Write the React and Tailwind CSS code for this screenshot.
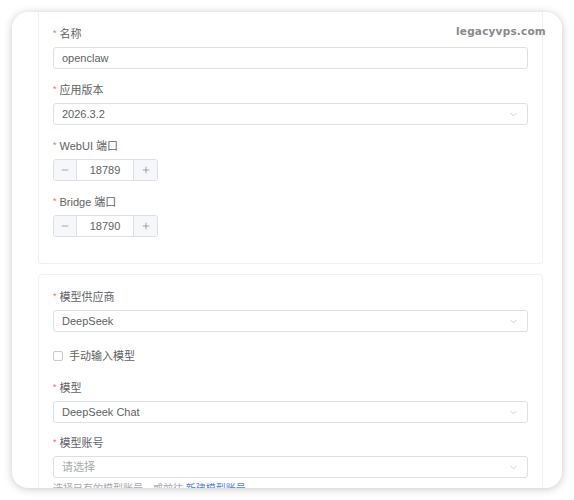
import { ChevronDown, Minus, Plus } from 'lucide-react';

const cjk = { fontFamily: '"Liberation Sans", "Noto Sans CJK SC", sans-serif' };

// Label row with the red required mark in front of it.
function Label({ text, required = true }) {
    return (
        <div className="h-[14px] flex items-center text-[11px] leading-[14px] text-[#606266] mb-[6px]">
            {required && <span className="text-[#f56c6c] text-[9px] mr-[3px] -mt-[3px]">*</span>}
            {text}
        </div>
    );
}

function TextInput({ value }) {
    return (
        <div className="h-[22px] border border-[#dcdfe6] rounded-[3px] flex items-center px-[8px] text-[11px] text-[#606266]">
            {value}
        </div>
    );
}

function Select({ value, placeholder }) {
    return (
        <div className="h-[22px] border border-[#dcdfe6] rounded-[3px] flex items-center justify-between pl-[8px] pr-[8px] text-[11px]">
            <span className={value ? 'text-[#606266]' : 'text-[#a8abb2]'}>{value || placeholder}</span>
            <ChevronDown size={11} strokeWidth={1.4} className="text-[#b5b8be]" />
        </div>
    );
}

function NumberInput({ value }) {
    return (
        <div className="h-[22px] w-[105px] border border-[#dcdfe6] rounded-[3px] flex text-[11px] text-[#606266] overflow-hidden">
            <div className="w-[23px] bg-[#f5f7fa] border-r border-[#dcdfe6] flex items-center justify-center text-[#606266]">
                <Minus size={10} strokeWidth={1.3} />
            </div>
            <div className="flex-1 flex items-center justify-center">{value}</div>
            <div className="w-[24px] bg-[#f5f7fa] border-l border-[#dcdfe6] flex items-center justify-center text-[#606266]">
                <Plus size={10} strokeWidth={1.3} />
            </div>
        </div>
    );
}

function Field({ label, children, gap = 'mb-[14px]' }) {
    return (
        <div className={gap}>
            <Label text={label} />
            {children}
        </div>
    );
}

export default function App() {
    return (
        <div className="w-[574px] h-[500px] bg-white p-[12px]" style={cjk}>
            <div className="relative h-[476px] w-[550px] rounded-[16px] bg-white shadow-[0_1px_8px_rgba(0,0,0,0.22)] overflow-hidden pl-[26px] pr-[19px]">
                <span
                    className="absolute right-[16px] top-[12px] text-[10.5px] font-bold text-[#8a8a8a] tracking-[0.2px]"
                    style={{ fontFamily: '"DejaVu Sans", sans-serif' }}
                >
                    legacyvps.com
                </span>

                {/* basic settings */}
                <div className="border border-t-0 border-[#eef0f3] rounded-b-[4px] px-[14px] pt-[15px] pb-[26px]">
                    <Field label="名称"><TextInput value="openclaw" /></Field>
                    <Field label="应用版本"><Select value="2026.3.2" /></Field>
                    <Field label="WebUI 端口"><NumberInput value="18789" /></Field>
                    <Field label="Bridge 端口" gap=""><NumberInput value="18790" /></Field>
                </div>

                {/* model settings */}
                <div className="mt-[10px] border border-[#eef0f3] rounded-[4px] px-[14px] pt-[15px] pb-[20px]">
                    <Field label="模型供应商" gap=""><Select value="DeepSeek" /></Field>
                    <div className="mt-[17px] mb-[18px] h-[14px] flex items-center text-[11px] text-[#606266]">
                        <span className="w-[10px] h-[10px] border border-[#c8cbd1] rounded-[2px] bg-white mr-[6px]"></span>
                        手动输入模型
                    </div>
                    <Field label="模型" gap="mb-[13px]"><Select value="DeepSeek Chat" /></Field>
                    <Field label="模型账号" gap=""><Select placeholder="请选择" /></Field>
                    <div className="mt-[4px] text-[10px] leading-[14px] text-[#a8abb2]">
                        选择已有的模型账号，或前往 <span className="text-[#5b7fd6]">新建模型账号</span>
                    </div>
                </div>
            </div>
        </div>
    );
}
